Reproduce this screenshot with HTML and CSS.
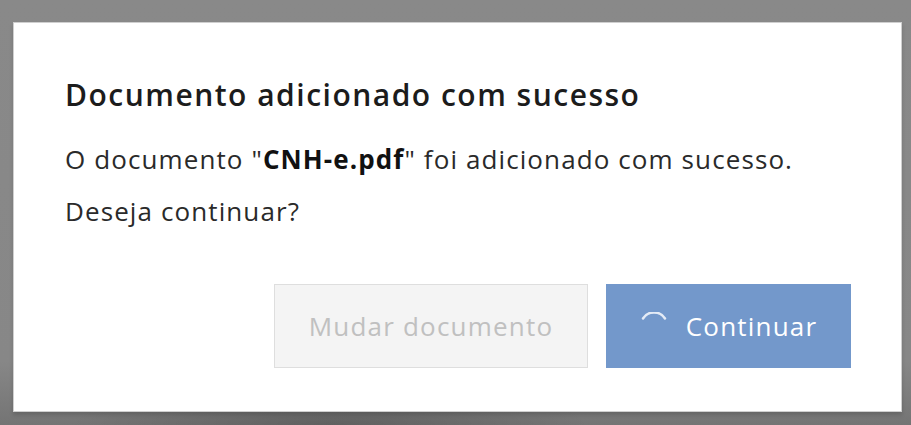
FILE: index.html
```html
<!DOCTYPE html>
<html lang="pt-BR">
<head>
    <meta charset="UTF-8">
    <meta name="viewport" content="width=device-width, initial-scale=1.0">
    <title>Documento adicionado</title>
    <link rel="stylesheet" href="styles.css">
</head>
<body>
    <div class="backdrop">
        <div class="dialog">
            <h2 class="dialog-title">Documento adicionado com sucesso</h2>
            <p class="dialog-text">O documento "<strong>CNH-e.pdf</strong>" foi adicionado com sucesso.<br>Deseja continuar?</p>

            <div class="dialog-actions">
                <button class="btn btn-secondary" disabled>Mudar documento</button>
                <button class="btn btn-primary">
                    <!-- loading spinner -->
                    <svg class="spinner" width="28" height="28" viewBox="0 0 28 28">
                        <path d="M3 6.5 A13 13 0 0 1 25 6.5" fill="none" stroke="#e4ebf6" stroke-width="2.5" stroke-linecap="round"/>
                    </svg>
                    Continuar
                </button>
            </div>
        </div>
    </div>
</body>
</html>
```

FILE: styles.css
```css
html, body {
    margin: 0;
    height: 100%;
}
body {
    background:
        radial-gradient(ellipse 260px 40px at 330px 100%, rgba(0, 0, 0, 0.18), transparent),
        linear-gradient(to bottom, #898989 0%, #878787 85%, #747474 100%);
    font-family: "Open Sans", "Noto Sans", sans-serif;
}
.backdrop {
    padding: 22px 9px 0 13px;
}
.dialog {
    box-sizing: border-box;
    height: 390px;
    background: #fff;
    border: 1px solid #cfcfcf;
    box-shadow: 0 3px 4px rgba(0, 0, 0, 0.15);
    padding: 52px 50px 0 51px;
    color: #1f1f1f;
}
.dialog-title {
    margin: 0;
    font-size: 30px;
    font-weight: 600;
    line-height: 40px;
    letter-spacing: 1.5px;
    color: #1c1c1c;
}
.dialog-text {
    margin: 18px 0 0;
    font-size: 26px;
    line-height: 52px;
    letter-spacing: 1.1px;
    color: #2a2a2a;
}
.dialog-text strong {
    font-weight: 700;
    color: #111;
}
.dialog-actions {
    display: flex;
    justify-content: flex-end;
    gap: 18px;
    margin-top: 47px;
}
.btn {
    display: flex;
    align-items: center;
    justify-content: center;
    gap: 18px;
    height: 84px;
    padding: 0 30px;
    font-family: inherit;
    font-size: 26px;
    letter-spacing: 1.2px;
    border: 1px solid transparent;
    border-radius: 0;
}
.btn-secondary {
    width: 314px;
    background: #f4f4f4;
    border-color: #dedede;
    color: #c0c0c0;
}
.btn-primary {
    width: 245px;
    background: #7398cb;
    border-color: #7398cb;
    color: #fff;
}
.spinner {
    flex: none;
}
```
